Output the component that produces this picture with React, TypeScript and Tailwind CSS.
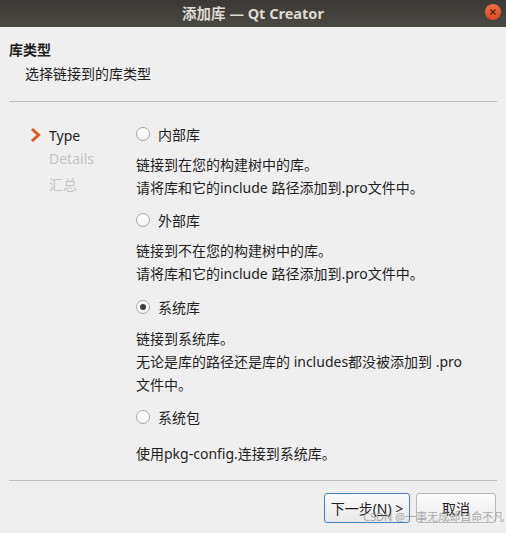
import React from "react";

const font = { fontFamily: '"Noto Sans", "Noto Sans CJK SC", sans-serif' };

function Radio({ checked }: { checked?: boolean }) {
  return (
    <span className="flex h-[14px] w-[14px] items-center justify-center rounded-full border border-[#a8a8a8] bg-gradient-to-b from-[#ffffff] to-[#f4f4f4]">
      {checked && <span className="h-[6px] w-[6px] rounded-full bg-[#3c3c3c]" />}
    </span>
  );
}

function Option({ label, checked }: { label: string; checked?: boolean }) {
  return (
    <div className="flex h-[22px] items-center gap-[8px]">
      <Radio checked={checked} />
      <span>{label}</span>
    </div>
  );
}

export default function App() {
  return (
    <div className="relative flex h-[533px] w-[506px] flex-col bg-[#efefef] text-[14px] text-[#1e1e1e]" style={font}>
      {/* title bar */}
      <div className="relative flex h-[27px] items-center justify-center bg-gradient-to-b from-[#3a3935] to-[#4b4944]">
        <span className="text-[14.5px] font-bold text-[#dfdbd2]">添加库 — Qt Creator</span>
        <span className="absolute right-[5px] top-[4px] flex h-[16px] w-[16px] items-center justify-center rounded-full bg-gradient-to-b from-[#f0703f] to-[#d9481b]">
          <svg width="8" height="8" viewBox="0 0 8 8">
            <path d="M1.5 1.5 L6.5 6.5 M6.5 1.5 L1.5 6.5" stroke="#5a2010" strokeWidth="1.3" />
          </svg>
        </span>
      </div>

      {/* header */}
      <div className="px-[9px] pt-[13px]">
        <div className="h-[20px] font-bold leading-[20px]">库类型</div>
        <div className="mt-[4px] pl-[16px] leading-[20px]">选择链接到的库类型</div>
      </div>
      <div className="mx-[9px] mt-[17px] h-[2px] border-t border-[#bdbdbd] border-b-[#fafafa]" />

      {/* body */}
      <div className="flex flex-1">
        <div className="w-[136px] pt-[20px]">
          <div className="flex h-[24px] items-center">
            <svg width="14" height="16" viewBox="0 0 14 16" className="ml-[29px] mr-[6px]">
              <path d="M3 2 L9.5 8 L3 14" fill="none" stroke="#e0561f" strokeWidth="3" strokeLinejoin="miter" />
            </svg>
            <span>Type</span>
          </div>
          <div className="h-[24px] pl-[49px] leading-[24px] text-[#c3c3c3]">Details</div>
          <div className="mt-[2px] h-[24px] pl-[49px] leading-[24px] text-[#c3c3c3]">汇总</div>
        </div>

        <div className="flex flex-col pt-[20px]">
          <Option label="内部库" />
          <div className="mt-[8px] leading-[23px]">
            链接到在您的构建树中的库。
            <br />
            请将库和它的include 路径添加到.pro文件中。
          </div>
          <div className="mt-[10px]">
            <Option label="外部库" />
          </div>
          <div className="mt-[8px] leading-[23px]">
            链接到不在您的构建树中的库。
            <br />
            请将库和它的include 路径添加到.pro文件中。
          </div>
          <div className="mt-[11px]">
            <Option label="系统库" checked />
          </div>
          <div className="mt-[9px] leading-[23px]">
            链接到系统库。
            <br />
            无论是库的路径还是库的 includes都没被添加到 .pro
            <br />
            文件中。
          </div>
          <div className="mt-[10px]">
            <Option label="系统包" />
          </div>
          <div className="mt-[14px] leading-[23px]">使用pkg-config.连接到系统库。</div>
        </div>
      </div>

      {/* footer */}
      <div className="mx-[9px] h-[2px] border-t border-[#bdbdbd] border-b-[#fafafa]" />
      <div className="flex justify-end gap-[6px] px-[10px] pb-[10px] pt-[11px]">
        <button className="h-[30px] w-[86px] rounded-[3px] border border-[#4a7fb5] bg-gradient-to-b from-[#fbfbfb] to-[#e9e9e9] text-[14px] text-[#1e1e1e]">
          下一步(<span className="underline">N</span>) &gt;
        </button>
        <button className="h-[30px] w-[80px] rounded-[3px] border border-[#b8b8b8] bg-gradient-to-b from-[#fbfbfb] to-[#ececec] text-[14px] text-[#1e1e1e]">
          取消
        </button>
      </div>

      {/* watermark */}
      <span className="absolute left-[363px] top-[510px] whitespace-nowrap text-[11px] leading-[13px] text-[#8f8f8f] opacity-70">
        CSDN @一事无成却自命不凡
      </span>
    </div>
  );
}
